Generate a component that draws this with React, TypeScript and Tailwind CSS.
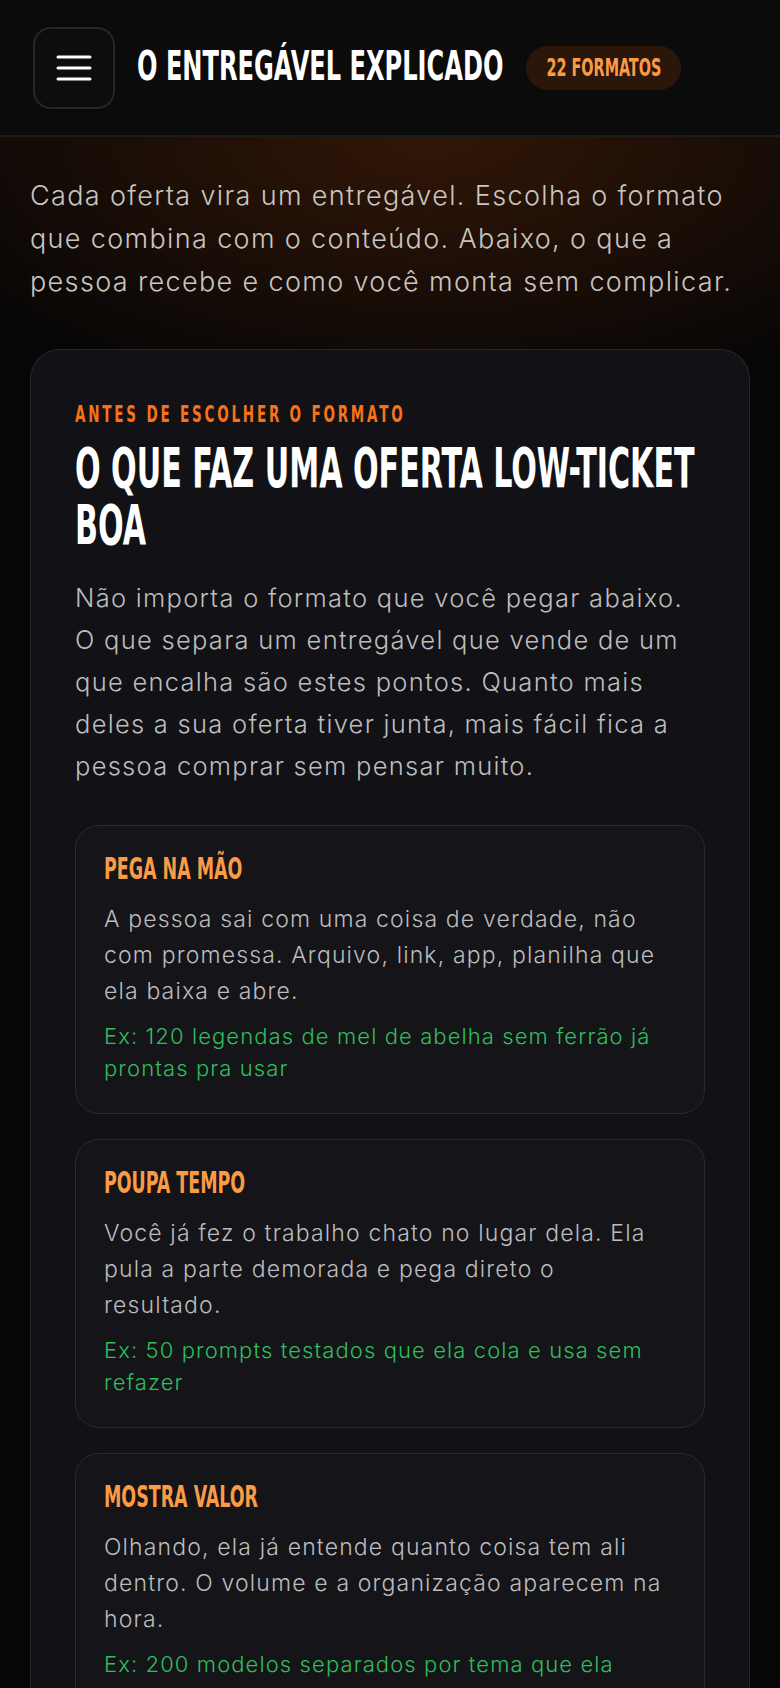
import React from "react";

// condensed caps: DejaVu Sans Condensed Bold, stretched vertically to get the tall narrow look
const display = "font-['DejaVu_Sans_Condensed','DejaVu_Sans',sans-serif] font-bold uppercase";
const body = "font-['Inter','Noto_Sans',sans-serif] font-light tracking-[0.05em]";

type Point = { title: string; text: string; example: string };

const points: Point[] = [
  {
    title: "Pega na mão",
    text: "A pessoa sai com uma coisa de verdade, não com promessa. Arquivo, link, app, planilha que ela baixa e abre.",
    example: "Ex: 120 legendas de mel de abelha sem ferrão já prontas pra usar",
  },
  {
    title: "Poupa tempo",
    text: "Você já fez o trabalho chato no lugar dela. Ela pula a parte demorada e pega direto o resultado.",
    example: "Ex: 50 prompts testados que ela cola e usa sem refazer",
  },
  {
    title: "Mostra valor",
    text: "Olhando, ela já entende quanto coisa tem ali dentro. O volume e a organização aparecem na hora.",
    example: "Ex: 200 modelos separados por tema que ela escolhe e usa",
  },
];

function MenuIcon() {
  return (
    <svg width="36" height="26" viewBox="0 0 36 26" fill="none">
      <path d="M2 2h32M2 13h32M2 24h32" stroke="white" strokeWidth="3" strokeLinecap="round" />
    </svg>
  );
}

function PointCard({ p }: { p: Point }) {
  return (
    <div className="rounded-[24px] border border-[#2a2a30] bg-[#141419] px-[28px] pt-[27px] pb-[29px]">
      <h3 className={`${display} scale-y-[1.56] text-[19.4px] leading-[34px] text-[#fb9b45]`}>{p.title}</h3>
      <p className={`${body} mt-[14px] text-[23px] leading-[36px] text-[#bcbcbc]`}>{p.text}</p>
      <p className={`${body} mt-[11px] text-[22px] leading-[32px] text-[#2fbf5b]`}>{p.example}</p>
    </div>
  );
}

export default function App() {
  return (
    <div className="min-h-screen bg-[#060606] text-white">
      <header className="flex h-[137px] items-center border-b-2 border-[#1c1c1c] bg-[#0b0b0b] pl-[33px]">
        <button className="flex h-[82px] w-[82px] shrink-0 items-center justify-center rounded-[18px] border-2 border-[#262626] bg-[#0d0d0d]">
          <MenuIcon />
        </button>
        <h1 className={`${display} ml-[22px] scale-y-[1.5] whitespace-nowrap text-[26.8px] leading-none text-white`}>
          O entregável explicado
        </h1>
        <span className="ml-[23px] flex h-[44px] items-center rounded-full bg-[#2b170a] px-[20px]">
          <span className={`${display} inline-block scale-y-[1.6] whitespace-nowrap text-[16px] leading-none text-[#fb9b45]`}>
            22 formatos
          </span>
        </span>
      </header>

      <main className="bg-[radial-gradient(ellipse_75%_280px_at_55%_0%,rgba(110,45,8,0.42),transparent)] px-[30px] pt-[37px]">
        <p className={`${body} text-[27px] leading-[43px] text-[#c9c5c0]`}>
          Cada oferta vira um entregável. Escolha o formato que combina com o conteúdo. Abaixo, o que a pessoa recebe e como você monta sem complicar.
        </p>

        <section className="mt-[46px] rounded-t-[30px] border border-b-0 border-[#27272c] bg-[#111116] px-[44px] pt-[51px] pb-[40px]">
          <div className={`${display} scale-y-[1.56] text-[15px] leading-[26px] tracking-[2.8px] text-[#f97316]`}>
            Antes de escolher o formato
          </div>
          <div className="mt-[14px] flex h-[112px] items-center">
            <h2 className={`${display} w-full scale-y-[1.66] text-[33.5px] leading-[33.7px] text-white`}>
              O que faz uma oferta low-ticket boa
            </h2>
          </div>
          <p className={`${body} mt-[24px] text-[25.5px] leading-[42px] text-[#bdbdbd]`}>
            Não importa o formato que você pegar abaixo. O que separa um entregável que vende de um que encalha são estes pontos. Quanto mais deles a sua oferta tiver junta, mais fácil fica a pessoa comprar sem pensar muito.
          </p>

          <div className="mt-[38px] flex flex-col gap-[25px]">
            {points.map((p) => (
              <PointCard key={p.title} p={p} />
            ))}
          </div>
        </section>
      </main>
    </div>
  );
}
